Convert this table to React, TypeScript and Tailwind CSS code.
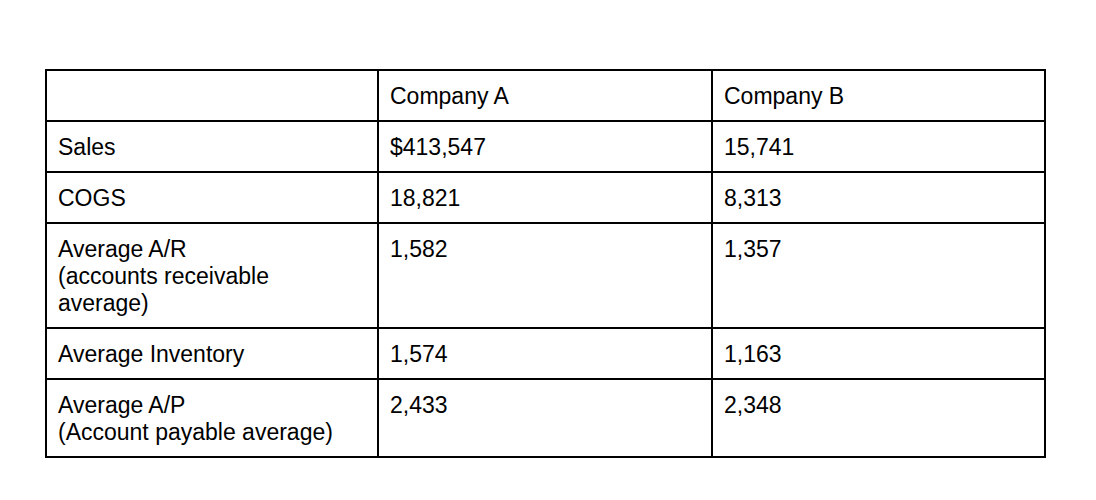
import React from 'react'

type Row = { label: string[]; a: string; b: string }

const rows: Row[] = [
  { label: ['Sales'], a: '$413,547', b: '15,741' },
  { label: ['COGS'], a: '18,821', b: '8,313' },
  { label: ['Average A/R', '(accounts receivable', 'average)'], a: '1,582', b: '1,357' },
  { label: ['Average Inventory'], a: '1,574', b: '1,163' },
  { label: ['Average A/P', '(Account payable average)'], a: '2,433', b: '2,348' },
]

function Cell({ children }: { children?: React.ReactNode }) {
  return (
    <div className="border-r-2 border-b-2 border-black pl-[11px] pr-2 pt-[12px] pb-[10px] leading-[27px]">
      {children}
    </div>
  )
}

export default function App() {
  return (
    <div
      className="w-[1096px] h-[500px] bg-white text-black text-[23px] pt-[69px] pl-[45px]"
      style={{ fontFamily: '"Liberation Sans", Arial, sans-serif' }}
    >
      <div className="grid grid-cols-[332px_334px_333px] w-[1001px] border-t-2 border-l-2 border-black">
        <Cell>{'\u00a0'}</Cell>
        <Cell>Company A</Cell>
        <Cell>Company B</Cell>
        {rows.map((r) => (
          <React.Fragment key={r.label[0]}>
            <Cell>
              {r.label.map((l) => (
                <div key={l}>{l}</div>
              ))}
            </Cell>
            <Cell>{r.a}</Cell>
            <Cell>{r.b}</Cell>
          </React.Fragment>
        ))}
      </div>
    </div>
  )
}
